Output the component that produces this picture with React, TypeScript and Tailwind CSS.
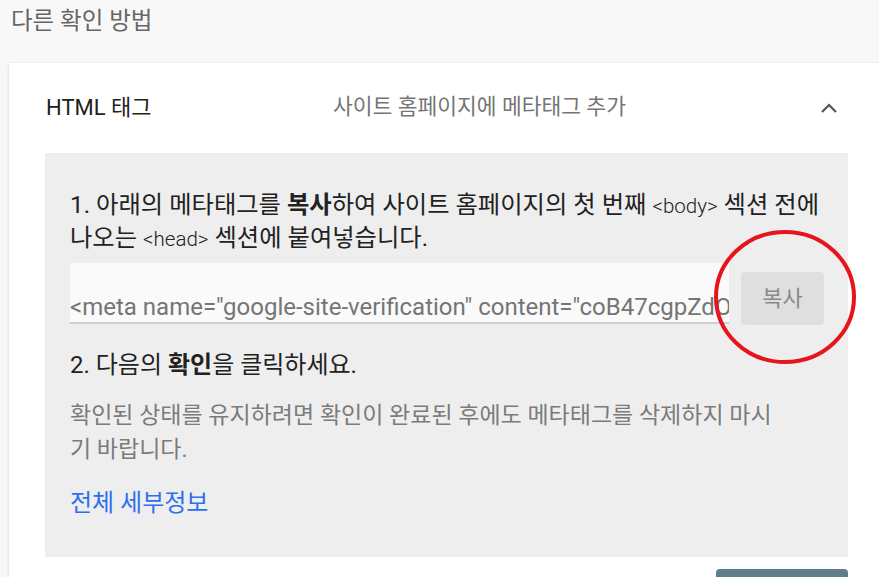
const font = { fontFamily: 'Roboto, "Noto Sans CJK KR", sans-serif' };

const App = () => {
  return (
    <div className="w-[879px] h-[577px] overflow-hidden bg-[#f8f8f8] text-[#212121]" style={font}>
      <div className="pl-[11px] pt-[5px] h-[63px] text-[23.5px] leading-[32px] text-[#666666]">다른 확인 방법</div>
      <div className="ml-[9px] w-[900px] bg-white shadow-[0_1px_3px_rgba(0,0,0,0.18)] pl-[36px]">
        <div className="flex items-center h-[90px] pb-[1px]">
          <div className="w-[288px] text-[22px] pl-[1px]">HTML 태그</div>
          <div className="w-[487px] text-[21.5px] text-[#757575]">사이트 홈페이지에 메타태그 추가</div>
          <svg width="18" height="12" viewBox="0 0 18 12" className="text-[#555555]">
            <polyline points="2,10 9,3 16,10" fill="none" stroke="currentColor" strokeWidth="2.2" />
          </svg>
        </div>
        <div className="relative w-[803px] bg-[#eeeeee] pl-[25px] pt-[36px] pb-[38px]">
          <p className="text-[24.3px] leading-[32px] text-[#222222] whitespace-nowrap">
            1. 아래의 메타태그를 <b className="font-bold">복사</b>하여 사이트 홈페이지의 첫 번째{" "}
            <span className="font-light text-[20.5px]">&lt;body&gt;</span> 섹션 전에
            <br />
            나오는 <span className="font-light text-[20.5px]">&lt;head&gt;</span> 섹션에 붙여넣습니다.
          </p>
          <div className="flex items-end mt-[8px] gap-[12px]">
            <div className="w-[659px] h-[61px] bg-[#fafafa] border-b-2 border-[#cfcfcf] flex items-end">
              <span className="block w-full overflow-hidden whitespace-nowrap text-[24px] leading-[30px] text-[#757575]">
                &lt;meta name="google-site-verification" content="coB47cgpZdOXk2vLq9mT4hR8sYwE1nF6uJ3aD0iGb5Q" /&gt;
              </span>
            </div>
            <button className="w-[83px] h-[53px] rounded-[4px] bg-[#dfdfdf] text-[22px] text-[#8a8a8a] mb-[-1px]">
              복사
            </button>
          </div>
          <p className="mt-[25px] text-[24px] leading-[32px] text-[#222222]">
            2. 다음의 <b className="font-bold">확인</b>을 클릭하세요.
          </p>
          <p className="mt-[18px] text-[23px] leading-[34px] text-[#7b7b7b] whitespace-nowrap">
            확인된 상태를 유지하려면 확인이 완료된 후에도 메타태그를 삭제하지 마시
            <br />기 바랍니다.
          </p>
          <a className="block mt-[20px] text-[24px] leading-[32px] text-[#2e6ff0]" href="#">
            전체 세부정보
          </a>
          <svg
            className="absolute left-[668px] top-[77px]"
            width="146"
            height="136"
            viewBox="0 0 146 136"
          >
            <ellipse cx="72" cy="67" rx="69" ry="65" fill="none" stroke="#e8141c" strokeWidth="4" />
          </svg>
        </div>
        <div className="flex h-[40px] pt-[12px]">
          <div className="ml-[671px] w-[132px] h-[30px] rounded-t-[4px] bg-[#5f7d8a]" />
        </div>
      </div>
    </div>
  );
};

export default App;
